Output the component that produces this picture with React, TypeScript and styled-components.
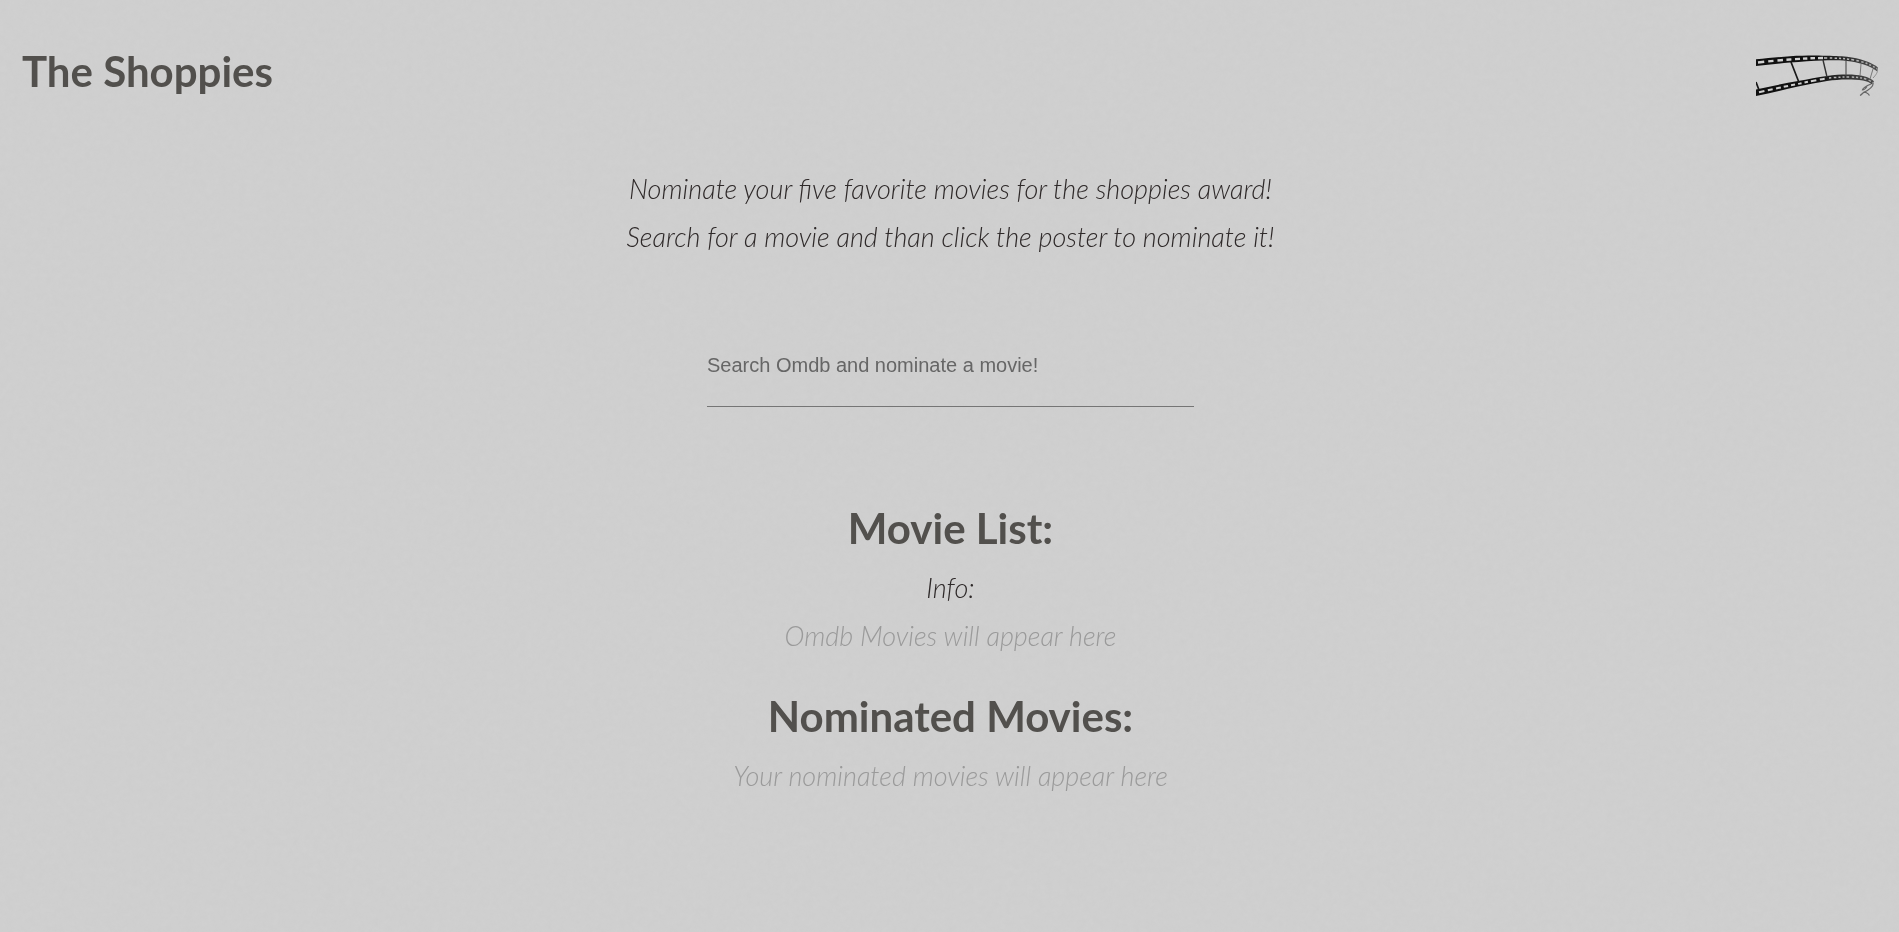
import React, { useState } from "react";
import styled, { createGlobalStyle } from "styled-components";

const GlobalStyle = createGlobalStyle`
  body {
    margin: 0;
    background: #d0d0d0;
    font-family: Lato, sans-serif;
  }
`;

const Texture = styled.svg`
  position: fixed;
  inset: 0;
  z-index: -1;
  width: 100%;
  height: 100%;
  opacity: 0.04;
`;

const Header = styled.header`
  display: flex;
  align-items: flex-start;
  justify-content: space-between;
  padding: 47px 20px 0 22px;
`;

const Title = styled.h1`
  margin: 0;
  color: #52504d;
  font-size: 42px;
  line-height: 48px;
  font-weight: 700;
`;

const Logo = styled.svg`
  display: block;
  width: 123px;
  height: 41px;
  margin-top: 8px;
`;

const Main = styled.main`
  display: flex;
  flex-direction: column;
  align-items: center;
  padding-left: 2px;
  text-align: center;
`;

const Intro = styled.div`
  margin-top: 69px;
`;

const Text = styled.p<{ $muted?: boolean }>`
  margin: 0;
  color: ${(p) => (p.$muted ? "#9a9a9a" : "#2e2929")};
  font-size: 27px;
  line-height: 48px;
  font-style: italic;
  font-weight: 300;
`;

const SearchForm = styled.form`
  width: 487px;
  max-width: 90%;
  margin-top: 64px;
`;

const SearchInput = styled.input`
  box-sizing: border-box;
  width: 100%;
  height: 82px;
  padding: 0;
  border: 0;
  border-bottom: 1px solid #757575;
  outline: 0;
  background: transparent;
  color: #3d3838;
  font-family: "Liberation Sans", Arial, sans-serif;
  font-size: 20px;

  &::placeholder {
    color: #666666;
    opacity: 1;
  }
`;

const Section = styled.section<{ $gap: number }>`
  margin-top: ${(p) => p.$gap}px;
`;

const Heading = styled(Title).attrs({ as: "h2" })`
  margin-bottom: 12px;
`;

const FilmStrip = () => (
  <Logo viewBox="0 0 123 41" role="img" aria-label="Film strip" fill="none">
    <defs>
      <linearGradient id="fade" gradientUnits="userSpaceOnUse" x1="60" y1="0" x2="122" y2="0">
        <stop offset="0" stopColor="#101010" />
        <stop offset="1" stopColor="#505050" />
      </linearGradient>
      <linearGradient id="hole" gradientUnits="userSpaceOnUse" x1="40" y1="0" x2="122" y2="0">
        <stop offset="0" stopColor="#d0d0d0" />
        <stop offset="1" stopColor="#a8a8a8" />
      </linearGradient>
    </defs>
    <path
      d="M0 4.300C12 3.100 24 1.900 34 1.300C46 .6 57 .5 67 .7C77 .8 84 1 91 1.700C98 2.500 103 3.700 108 5.400C114 7.300 120 10.200 122 12.700L121 16.300C118 13.800 113 11.300 107 9.300C102 7.600 97 6.500 91 5.900C84 5.300 76 5.100 67 5.400C57 5.800 45 6.600 34 7.600C23 8.600 11 9.900 0 11.100Z"
      fill="url(#fade)"
    />
    <path
      d="M0 34.600C14 31.100 28 28.600 42 26.100C52 24.100 62 22.100 71 20.900C78 20.100 85 19.600 91 19.600C98 19.600 103 20.100 107 21.100C112 22.300 117 24.600 118 26.600L116 29.400C114 27.400 111 26.200 107 25.400C102 24.600 97 24.400 91 24.400C84 24.400 78 24.900 71 25.900C62 27.200 52 29.400 42 31.600C28 34.900 14 37.900 0 41Z"
      fill="url(#fade)"
    />
    <path
      d="M2 7.500C14 6.100 24 5.200 34 4.500C46 3.600 57 3.100 67 3"
      stroke="#d0d0d0"
      strokeWidth="2.400"
      strokeDasharray="6 4 5.500 4 5.500 3.500 5 3.500 5 3 4.500 3 4.500 3"
    />
    <path
      d="M68 3C77 3 84 3.200 91 3.900C98 4.700 103 5.900 108 7.500C113 9.100 118 11.500 121 14"
      stroke="url(#hole)"
      strokeWidth="1.500"
      strokeDasharray="3 2.500 2.500 2.500 2.500 2 2 2 2 2 2 2"
    />
    <path
      d="M3 37.300C16 34.200 28 31.700 42 28.900C52 26.800 62 24.700 71 23.400"
      stroke="#d0d0d0"
      strokeWidth="2"
      strokeDasharray="5.500 3.500 5 3.500 5 3 4.500 3 4 3 3.500 3 3.500 3"
    />
    <path
      d="M73 23.100C78 22.500 85 22 91 22C98 22 103 22.400 107 23.200C111 24.200 115 25.800 117 28"
      stroke="url(#hole)"
      strokeWidth="1.500"
      strokeDasharray="2.500 2.500 2.500 2 2 2 2 2"
    />
    <path d="M35 7L43 27.500M0 27L3 35" stroke="#181818" strokeWidth="1.700" />
    <path d="M67 5L71 22" stroke="#333" strokeWidth="1.400" />
    <path d="M90 5.500V20.500" stroke="#555" strokeWidth="1.200" />
    <path d="M105 9L104 21M117 14L114 24" stroke="#777" />
    <path d="M121.500 14C122 17 120 20 117 23" stroke="#8c8c8c" />
    <path d="M115 29C110 31 107 33 106.500 35C108 35 110 33 111 31.500M117 28C118 32 111 36 107 38C106 39 105 40 104 40.500M107 37.500C109 36.500 112 38 113.500 40.500" stroke="#666" strokeWidth="1.200" />
  </Logo>
);

export default function App() {
  const [query, setQuery] = useState("");
  return (
    <>
      <GlobalStyle />
      <Texture aria-hidden="true">
        <filter id="grain">
          <feTurbulence type="fractalNoise" baseFrequency="0.15" numOctaves="2" />
          <feColorMatrix type="saturate" values="0" />
        </filter>
        <rect width="100%" height="100%" filter="url(#grain)" />
      </Texture>
      <Header>
        <Title>The Shoppies</Title>
        <FilmStrip />
      </Header>
      <Main>
        <Intro>
          <Text>Nominate your five favorite movies for the shoppies award!</Text>
          <Text>Search for a movie and than click the poster to nominate it!</Text>
        </Intro>
        <SearchForm onSubmit={(e) => e.preventDefault()}>
          <SearchInput
            type="text"
            aria-label="Search movies"
            placeholder="Search Omdb and nominate a movie!"
            value={query}
            onChange={(e) => setQuery(e.target.value)}
          />
        </SearchForm>
        <Section $gap={97}>
          <Heading>Movie List:</Heading>
          <Text>Info:</Text>
          <Text $muted>Omdb Movies will appear here</Text>
        </Section>
        <Section $gap={32}>
          <Heading>Nominated Movies:</Heading>
          <Text $muted>Your nominated movies will appear here</Text>
        </Section>
      </Main>
    </>
  );
}
